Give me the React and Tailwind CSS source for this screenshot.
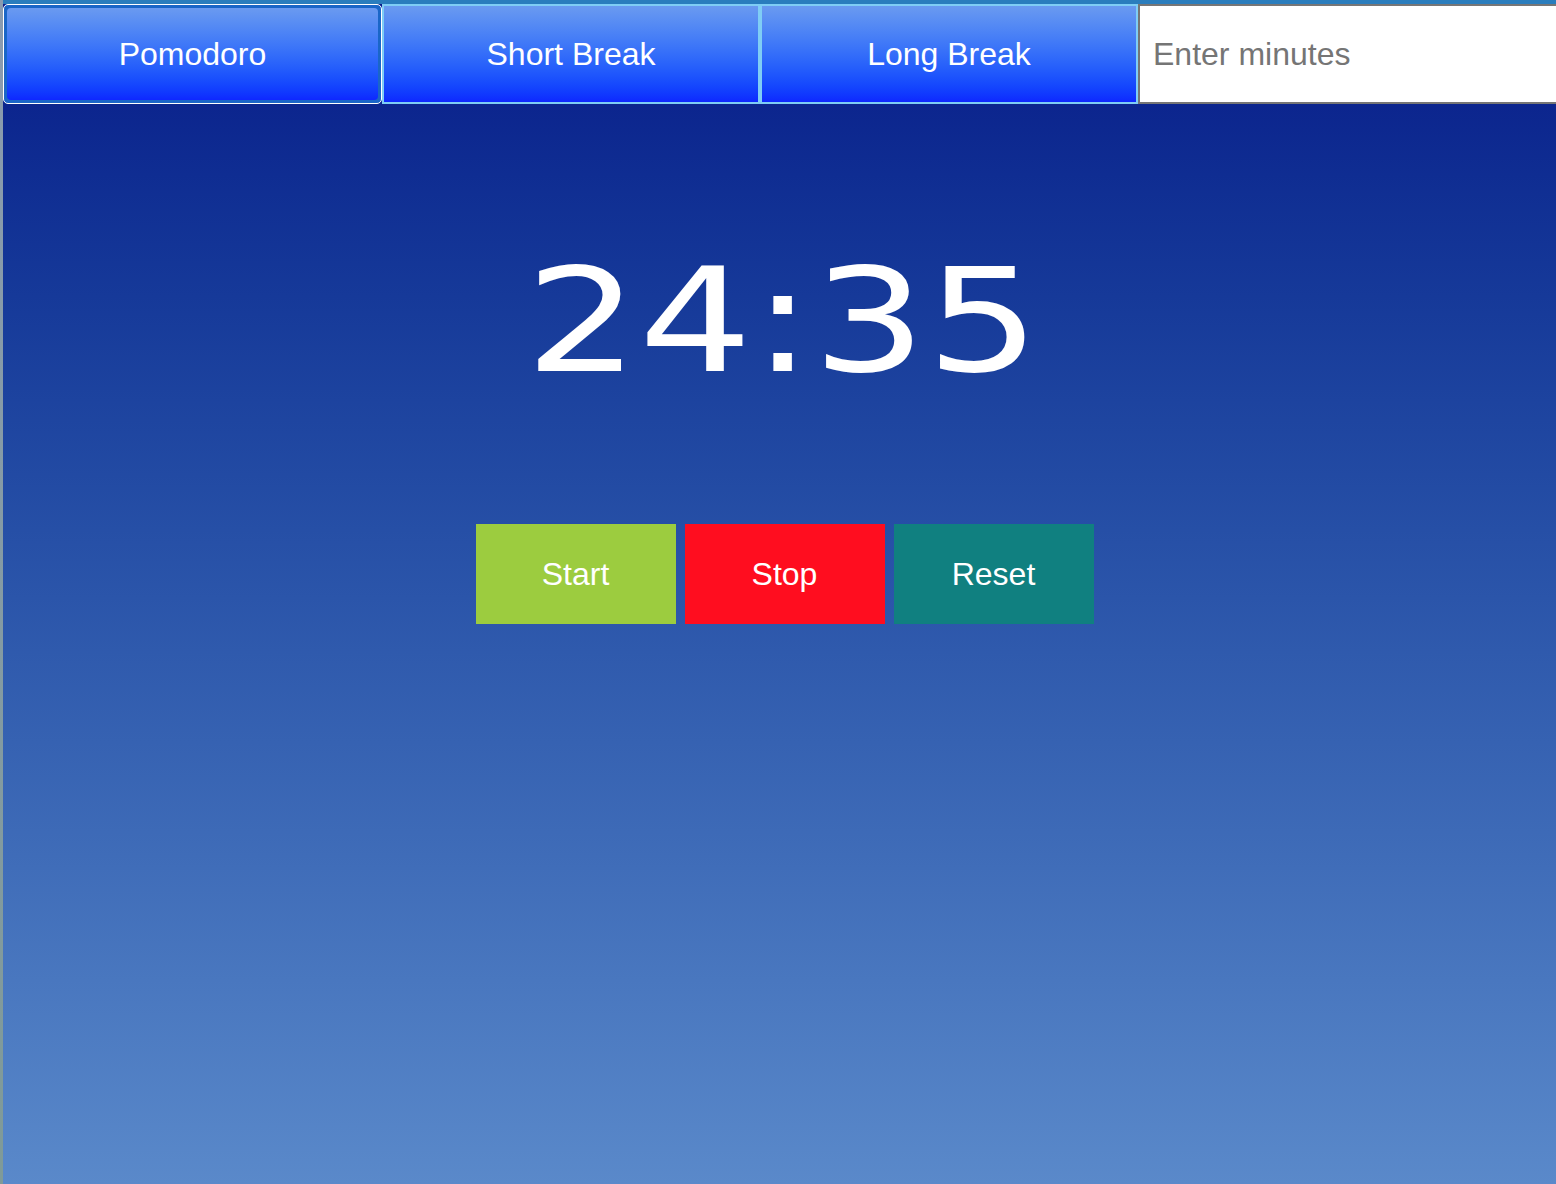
import React, { useState } from "react";

const tabs = ["Pomodoro", "Short Break", "Long Break"];

const App = () => {
  const [active, setActive] = useState("Pomodoro");
  const [minutes, setMinutes] = useState("");

  return (
    <div
      className="flex h-[1184px] w-full overflow-hidden"
      style={{ fontFamily: '"Liberation Sans", Arial, sans-serif' }}
    >
      <div className="w-[3px] shrink-0 bg-gradient-to-b from-[#8a9bb0] to-[#7f9a98]" />
      <div className="flex min-w-0 flex-1 flex-col overflow-hidden bg-gradient-to-b from-[#091888] to-[#5a89ca]">
        <div className="h-[4px] bg-[#2a7dbd]" />
        <div className="flex h-[100px]">
          {tabs.map((t) => (
            <button
              key={t}
              onClick={() => setActive(t)}
              className={
                active === t
                  ? "w-[379px] shrink-0 rounded-[5px] border border-white bg-[#1a66c8] p-[3px] text-[32px] text-white"
                  : "w-[378px] shrink-0 border-2 border-[#7fcdf5] bg-gradient-to-b from-[#6a9af0] to-[#0f27ff] text-[32px] text-white"
              }
            >
              {active === t ? (
                <span className="flex h-full w-full items-center justify-center rounded-[4px] bg-gradient-to-b from-[#6a9af0] to-[#0f27ff]">
                  {t}
                </span>
              ) : (
                t
              )}
            </button>
          ))}
          <input
            value={minutes}
            onChange={(e) => setMinutes(e.target.value)}
            placeholder="Enter minutes"
            className="w-[440px] shrink-0 border-2 border-[#767676] bg-white px-[13px] text-[32px] text-black outline-none placeholder:text-[#757575]"
          />
        </div>

        <div className="mt-[142px] flex justify-center pl-[6px]">
          <div
            className="scale-x-[1.24] text-[144px] leading-[150px] text-white"
            style={{ fontFamily: '"DejaVu Sans", sans-serif' }}
          >
            24:35
          </div>
        </div>

        <div className="mt-[128px] flex justify-center gap-[9px] pl-[10px]">
          <button className="h-[100px] w-[200px] bg-[#9ccc3f] text-[32px] text-white">Start</button>
          <button className="h-[100px] w-[200px] bg-[#ff0d1f] text-[32px] text-white">Stop</button>
          <button className="h-[100px] w-[200px] bg-[#108080] text-[32px] text-white">Reset</button>
        </div>
      </div>
    </div>
  );
};

export default App;
